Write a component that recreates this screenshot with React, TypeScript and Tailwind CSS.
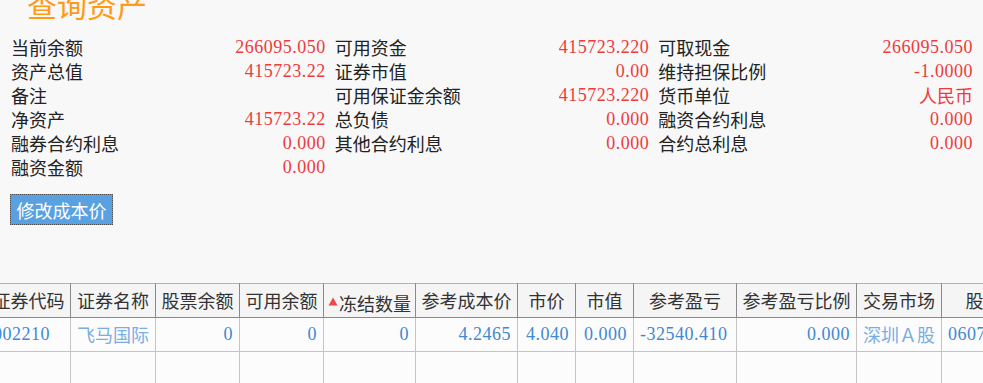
const cjk = { fontFamily: '"Noto Sans CJK SC", sans-serif' };
const num = { fontFamily: '"Liberation Serif", "Noto Sans CJK SC", serif', letterSpacing: "0.5px" };

type Item = { label: string; value?: string; cn?: boolean } | null;

const summary: Item[] = [
  { label: "当前余额", value: "266095.050" },
  { label: "可用资金", value: "415723.220" },
  { label: "可取现金", value: "266095.050" },
  { label: "资产总值", value: "415723.22" },
  { label: "证券市值", value: "0.00" },
  { label: "维持担保比例", value: "-1.0000" },
  { label: "备注" },
  { label: "可用保证金余额", value: "415723.220" },
  { label: "货币单位", value: "人民币", cn: true },
  { label: "净资产", value: "415723.22" },
  { label: "总负债", value: "0.000" },
  { label: "融资合约利息", value: "0.000" },
  { label: "融券合约利息", value: "0.000" },
  { label: "其他合约利息", value: "0.000" },
  { label: "合约总利息", value: "0.000" },
  { label: "融资金额", value: "0.000" },
  null,
  null,
];

const widths = [84, 85, 84, 84, 92, 102, 58, 58, 103, 120, 85, 120];

const headers = [
  "证券代码",
  "证券名称",
  "股票余额",
  "可用余额",
  "冻结数量",
  "参考成本价",
  "市价",
  "市值",
  "参考盈亏",
  "参考盈亏比例",
  "交易市场",
  "股东代码",
];

const row: { v: string; align: "left" | "right"; cn?: boolean }[] = [
  { v: "002210", align: "left" },
  { v: "飞马国际", align: "left", cn: true },
  { v: "0", align: "right" },
  { v: "0", align: "right" },
  { v: "0", align: "right" },
  { v: "4.2465", align: "right" },
  { v: "4.040", align: "right" },
  { v: "0.000", align: "right" },
  { v: "-32540.410", align: "left" },
  { v: "0.000", align: "right" },
  { v: "深圳Ａ股", align: "left", cn: true },
  { v: "0607318826", align: "left" },
];

export default function App() {
  return (
    <div className="h-[383px] w-[983px] overflow-hidden bg-[#f8f8f8] text-[#222]" style={cjk}>
      <h1 className="ml-[27px] mt-[-11px] text-[30px] leading-[30px] text-[#ff9a14]">查询资产</h1>

      <div className="ml-[11px] mt-[16px] grid w-[962px] grid-cols-3 gap-x-[9px] text-[18px] leading-[24px]">
        {summary.map((it, i) =>
          it ? (
            <div key={i} className="flex items-center justify-between whitespace-nowrap">
              <span>{it.label}</span>
              {it.value && (
                <span className="text-[#ee3b3b]" style={it.cn ? cjk : num}>
                  {it.value}
                </span>
              )}
            </div>
          ) : (
            <div key={i} className="h-[24px]" />
          )
        )}
      </div>

      <button className="ml-[10px] mt-[15px] flex h-[31px] w-[103px] items-center justify-center border border-dotted border-[#4a4a4a] bg-[#59a1e1] text-[18px] leading-none text-white">
        修改成本价
      </button>

      <table className="ml-[-14px] mt-[58px] table-fixed border-collapse text-[18px]" style={{ width: 1075 }}>
        <colgroup>
          {widths.map((w, i) => (
            <col key={i} style={{ width: w }} />
          ))}
        </colgroup>
        <thead>
          <tr className="h-[30px] border-t border-b border-t-[#a9b4c2] border-b-[#8a8a8a] bg-[#f5f5f5]">
            {headers.map((h, i) => (
              <th
                key={i}
                className="whitespace-nowrap border-x border-[#8a8a8a] px-0 text-center font-normal leading-[28px] text-[#333]"
              >
                {i === 4 ? (
                  <span className="inline-flex items-center">
                    <svg width="10" height="9" viewBox="0 0 10 9" className="mr-[1px] mb-[2px]">
                      <path d="M5 0.5 L9.5 8.5 L0.5 8.5 Z" fill="#f04646" />
                    </svg>
                    {h}
                  </span>
                ) : (
                  h
                )}
              </th>
            ))}
          </tr>
        </thead>
        <tbody className="bg-[#fcfcfc]">
          <tr className="h-[34px] border-b border-[#c4c4c4]">
            {row.map((c, i) => (
              <td
                key={i}
                className={`whitespace-nowrap border-x border-[#c4c4c4] px-[6px] ${
                  c.align === "right" ? "text-right" : "text-left"
                } ${c.cn ? "text-[#7aaee2]" : "text-[#3f88d6]"}`}
                style={c.cn ? cjk : num}
              >
                {c.v}
              </td>
            ))}
          </tr>
          <tr className="h-[34px]">
            {widths.map((_, i) => (
              <td key={i} className="border-x border-[#c4c4c4]" />
            ))}
          </tr>
        </tbody>
      </table>
    </div>
  );
}
